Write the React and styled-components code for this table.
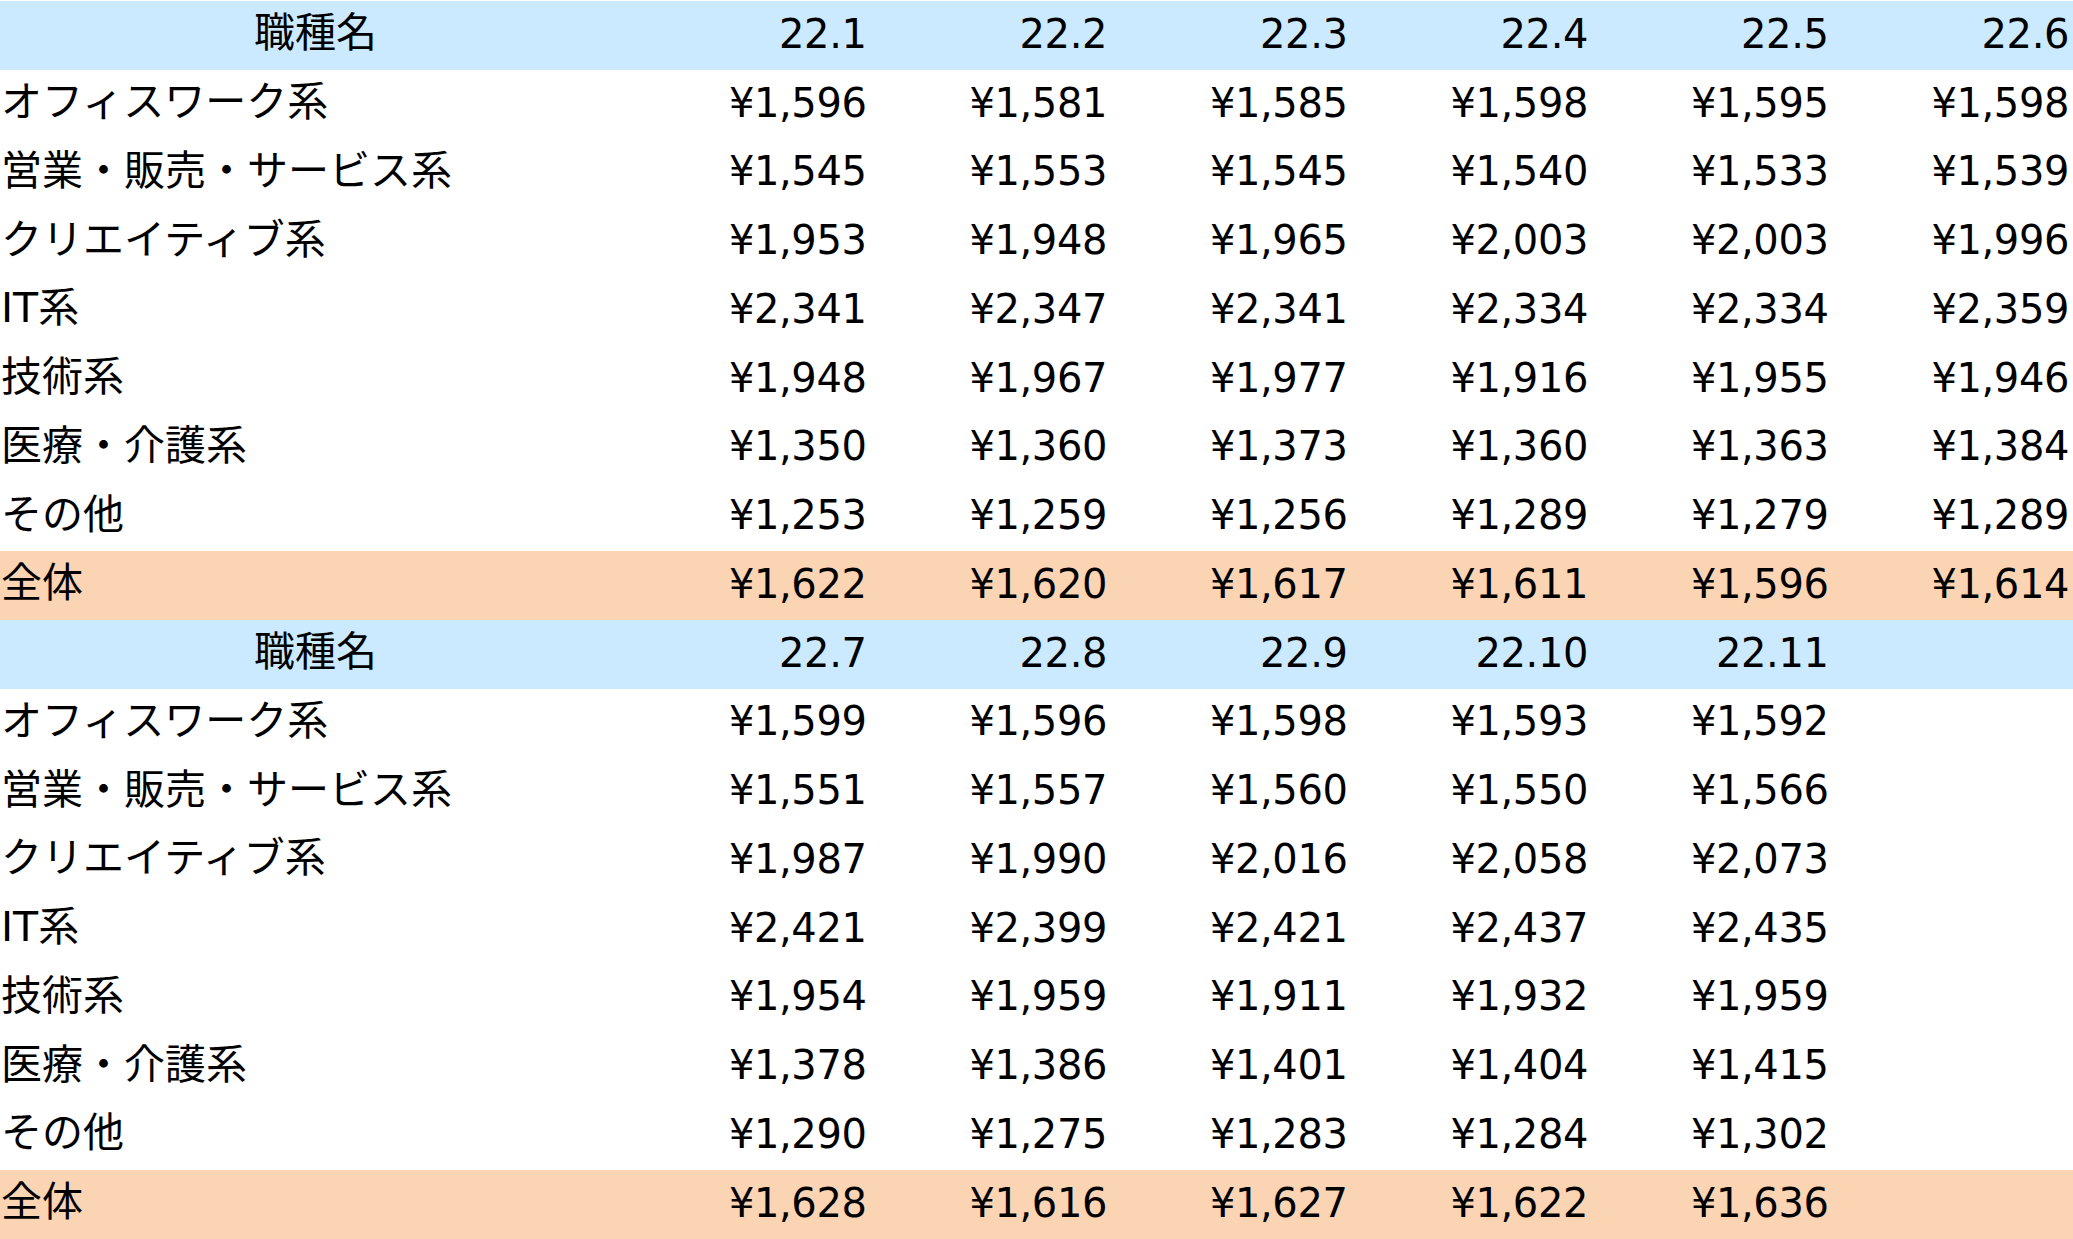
import React from "react";
import styled, { createGlobalStyle } from "styled-components";

const GlobalStyle = createGlobalStyle`
  html, body {
    margin: 0;
    padding: 0;
    background: #ffffff;
  }
  body {
    padding-top: 1px;
    font-family: "DejaVu Sans", "Noto Sans CJK JP", sans-serif;
    color: #000;
  }
`;

const tables = [
  {
    months: ["22.1", "22.2", "22.3", "22.4", "22.5", "22.6"],
    rows: [
      ["オフィスワーク系", ["¥1,596", "¥1,581", "¥1,585", "¥1,598", "¥1,595", "¥1,598"]],
      ["営業・販売・サービス系", ["¥1,545", "¥1,553", "¥1,545", "¥1,540", "¥1,533", "¥1,539"]],
      ["クリエイティブ系", ["¥1,953", "¥1,948", "¥1,965", "¥2,003", "¥2,003", "¥1,996"]],
      ["IT系", ["¥2,341", "¥2,347", "¥2,341", "¥2,334", "¥2,334", "¥2,359"]],
      ["技術系", ["¥1,948", "¥1,967", "¥1,977", "¥1,916", "¥1,955", "¥1,946"]],
      ["医療・介護系", ["¥1,350", "¥1,360", "¥1,373", "¥1,360", "¥1,363", "¥1,384"]],
      ["その他", ["¥1,253", "¥1,259", "¥1,256", "¥1,289", "¥1,279", "¥1,289"]],
    ],
    total: ["¥1,622", "¥1,620", "¥1,617", "¥1,611", "¥1,596", "¥1,614"],
  },
  {
    months: ["22.7", "22.8", "22.9", "22.10", "22.11", ""],
    rows: [
      ["オフィスワーク系", ["¥1,599", "¥1,596", "¥1,598", "¥1,593", "¥1,592", ""]],
      ["営業・販売・サービス系", ["¥1,551", "¥1,557", "¥1,560", "¥1,550", "¥1,566", ""]],
      ["クリエイティブ系", ["¥1,987", "¥1,990", "¥2,016", "¥2,058", "¥2,073", ""]],
      ["IT系", ["¥2,421", "¥2,399", "¥2,421", "¥2,437", "¥2,435", ""]],
      ["技術系", ["¥1,954", "¥1,959", "¥1,911", "¥1,932", "¥1,959", ""]],
      ["医療・介護系", ["¥1,378", "¥1,386", "¥1,401", "¥1,404", "¥1,415", ""]],
      ["その他", ["¥1,290", "¥1,275", "¥1,283", "¥1,284", "¥1,302", ""]],
    ],
    total: ["¥1,628", "¥1,616", "¥1,627", "¥1,622", "¥1,636", ""],
  },
];

const rowColors = {
  head: "#cceaff",
  body: "#ffffff",
  total: "#fbd4b4",
};

const Sheet = styled.div`
  display: flex;
  flex-direction: column;
  width: 2073px;
`;

const Row = styled.div`
  display: grid;
  grid-template-columns: 630px repeat(6, 1fr);
  height: 68.75px;
  align-items: center;
  background: ${(p) => rowColors[p.$kind]};
`;

const Label = styled.div`
  font-size: 41px;
  line-height: 1;
  padding-left: 1px;
  margin-top: -3px;
  white-space: nowrap;
  text-align: ${(p) => (p.$center ? "center" : "left")};
`;

const Num = styled.div`
  font-size: 40px;
  line-height: 1;
  letter-spacing: -0.4px;
  text-align: right;
  padding-right: 4px;
  margin-top: -3px;
  white-space: nowrap;
`;

const Table = ({ data }) => (
  <>
    <Row $kind="head">
      <Label $center>職種名</Label>
      {data.months.map((m, i) => (
        <Num key={i}>{m}</Num>
      ))}
    </Row>
    {data.rows.map(([name, vals]) => (
      <Row $kind="body" key={name}>
        <Label>{name}</Label>
        {vals.map((v, i) => (
          <Num key={i}>{v}</Num>
        ))}
      </Row>
    ))}
    <Row $kind="total">
      <Label>全体</Label>
      {data.total.map((v, i) => (
        <Num key={i}>{v}</Num>
      ))}
    </Row>
  </>
);

export default function App() {
  return (
    <>
      <GlobalStyle />
      <Sheet>
        {tables.map((t, i) => (
          <Table data={t} key={i} />
        ))}
      </Sheet>
    </>
  );
}
